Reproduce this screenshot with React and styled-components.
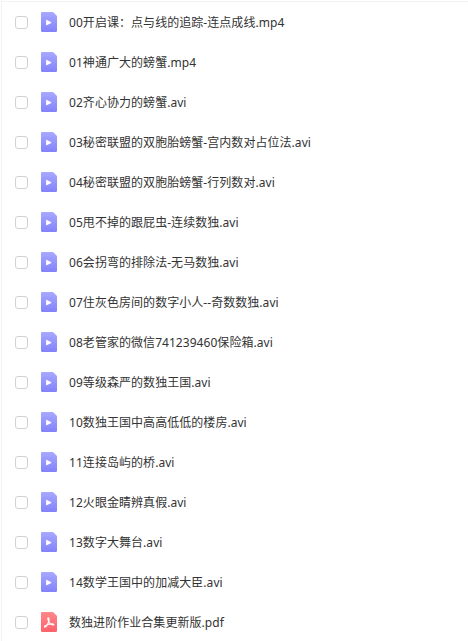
import styled, { createGlobalStyle } from "styled-components";

const files = [
  { name: "00开启课：点与线的追踪-连点成线.mp4", type: "video" },
  { name: "01神通广大的螃蟹.mp4", type: "video" },
  { name: "02齐心协力的螃蟹.avi", type: "video" },
  { name: "03秘密联盟的双胞胎螃蟹-宫内数对占位法.avi", type: "video" },
  { name: "04秘密联盟的双胞胎螃蟹-行列数对.avi", type: "video" },
  { name: "05甩不掉的跟屁虫-连续数独.avi", type: "video" },
  { name: "06会拐弯的排除法-无马数独.avi", type: "video" },
  { name: "07住灰色房间的数字小人--奇数数独.avi", type: "video" },
  { name: "08老管家的微信741239460保险箱.avi", type: "video" },
  { name: "09等级森严的数独王国.avi", type: "video" },
  { name: "10数独王国中高高低低的楼房.avi", type: "video" },
  { name: "11连接岛屿的桥.avi", type: "video" },
  { name: "12火眼金睛辨真假.avi", type: "video" },
  { name: "13数字大舞台.avi", type: "video" },
  { name: "14数学王国中的加减大臣.avi", type: "video" },
  { name: "数独进阶作业合集更新版.pdf", type: "pdf" },
];

const VideoIcon = () => (
  <FileIcon viewBox="0 0 16 20">
    <defs>
      <linearGradient id="video" x1="0" y1="0" x2="0" y2="1">
        <stop offset="0" stopColor="#a8a8ff" />
        <stop offset="1" stopColor="#8282fc" />
      </linearGradient>
    </defs>
    <path
      d="M1.2 0H12L16 4V18.8A1.2 1.2 0 0 1 14.8 20H1.2A1.2 1.2 0 0 1 0 18.8V1.2A1.2 1.2 0 0 1 1.2 0Z"
      fill="url(#video)"
    />
    <path d="M5.5 8.2V13L10.2 10.6Z" fill="#fff" stroke="#fff" strokeWidth="0.8" strokeLinejoin="round" />
  </FileIcon>
);

const PdfIcon = () => (
  <FileIcon viewBox="0 0 16 20">
    <defs>
      <linearGradient id="pdf" x1="0" y1="0" x2="0" y2="1">
        <stop offset="0" stopColor="#ff868b" />
        <stop offset="1" stopColor="#ff626b" />
      </linearGradient>
    </defs>
    <path
      d="M1.2 0H12L16 4V18.8A1.2 1.2 0 0 1 14.8 20H1.2A1.2 1.2 0 0 1 0 18.8V1.2A1.2 1.2 0 0 1 1.2 0Z"
      fill="url(#pdf)"
    />
    <path
      d="M7 5.9C8.4 5.5 8.3 7.8 7.6 9.8C6.8 12.1 5 15.1 3.8 15.1C2.4 14.6 5 12.8 7.8 12.2C10.4 11.7 13.2 11.7 12.8 12.7C12 13.7 9.4 12 8.2 10.2C7.2 8.5 6.2 6.5 7 5.9Z"
      fill="none"
      stroke="#fff"
      strokeWidth="1.1"
      strokeLinejoin="round"
    />
  </FileIcon>
);

const App = () => {
  return (
    <>
      <GlobalStyle />
      <FileList>
        {files.map(({ name, type }) => (
          <FileRow key={name}>
            <Checkbox type="checkbox" aria-label={name} />
            {type === "pdf" ? <PdfIcon /> : <VideoIcon />}
            <FileName>{name}</FileName>
          </FileRow>
        ))}
      </FileList>
    </>
  );
};

export default App;

const GlobalStyle = createGlobalStyle`
  body {
    margin: 0;
    background: #fff;
    overflow: hidden;
  }
`;

const FileList = styled.ul`
  box-sizing: border-box;
  height: 641px;
  margin: 0 0 0 1px;
  padding: 0;
  list-style: none;
  border-left: 1px solid #f2f2f2;
  overflow: hidden;
  &::before {
    content: "";
    display: block;
    height: 1px;
    margin-top: 1px;
    background: #f2f2f2;
  }
`;

const FileRow = styled.li`
  display: flex;
  align-items: center;
  height: 40px;
  padding-left: 13px;
`;

const Checkbox = styled.input`
  appearance: none;
  box-sizing: border-box;
  flex: none;
  width: 13px;
  height: 13px;
  margin: 1px 13px 0 0;
  border: 1px solid #d2d2d2;
  border-radius: 3px;
  background: #fff;
`;

const FileIcon = styled.svg`
  flex: none;
  width: 16px;
  height: 20px;
  margin-right: 12px;
`;

const FileName = styled.span`
  padding-top: 2px;
  font-family: "Noto Sans", "Noto Sans CJK SC", sans-serif;
  font-size: 12px;
  line-height: 20px;
  letter-spacing: 0.05px;
  color: #333;
  white-space: nowrap;
`;
